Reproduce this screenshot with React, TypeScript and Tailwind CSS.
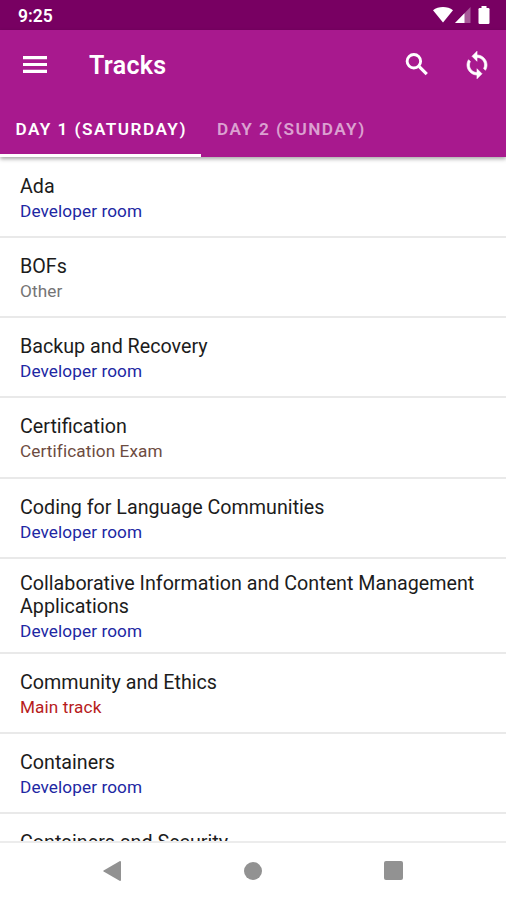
import React, { useState } from 'react';

interface Track {
  name: string;
  type: 'Developer room' | 'Other' | 'Certification Exam' | 'Main track';
  tall?: boolean;
}

const TYPE_COLORS: Record<Track['type'], string> = {
  'Developer room': 'text-[#2127a3]',
  Other: 'text-[#757575]',
  'Certification Exam': 'text-[#6d4c41]',
  'Main track': 'text-[#b71c1c]',
};

const TRACKS: Track[] = [
  { name: 'Ada', type: 'Developer room' },
  { name: 'BOFs', type: 'Other' },
  { name: 'Backup and Recovery', type: 'Developer room' },
  { name: 'Certification', type: 'Certification Exam' },
  { name: 'Coding for Language Communities', type: 'Developer room' },
  {
    name: 'Collaborative Information and Content Management Applications',
    type: 'Developer room',
    tall: true,
  },
  { name: 'Community and Ethics', type: 'Main track' },
  { name: 'Containers', type: 'Developer room' },
  { name: 'Containers and Security', type: 'Developer room' },
];

const TABS = ['DAY 1 (SATURDAY)', 'DAY 2 (SUNDAY)'];

const StatusBar: React.FC = () => (
  <div className="flex h-[30px] shrink-0 items-center justify-between bg-[#780062] pl-[18px] pr-[16px] text-white">
    <span className="pt-[3px] text-[17.5px] font-semibold leading-none">9:25</span>
    <div className="flex items-center">
      <svg className="h-[16px] w-[20px]" viewBox="0 0 20 16" fill="currentColor">
        <path d="M0 3.2C2.8 1 6.2 0 10 0s7.2 1 10 3.2L10 15.5z" />
      </svg>
      <svg className="ml-[2px] h-[16px] w-[16px]" viewBox="0 0 16 16" fill="currentColor">
        <path d="M15.5 0v16H0z" opacity="0.35" />
        <path d="M9.5 6.2V16H0z" />
      </svg>
      <svg className="ml-[7px] h-[18px] w-[12px]" viewBox="0 0 12 18" fill="currentColor">
        <rect x="3.5" y="0" width="5" height="4" />
        <rect x="0.5" y="2" width="11" height="16" rx="1.2" />
      </svg>
    </div>
  </div>
);

const TrackRow: React.FC<{ track: Track }> = ({ track }) => (
  <li
    className={`flex shrink-0 flex-col justify-center border-b-2 border-[#e9e9e9] px-5 pt-[2px] ${
      track.tall ? 'h-[95px]' : 'h-[80.15px]'
    }`}
  >
    <p className="text-[19.7px] leading-[23px] text-[#1c1c1c]">{track.name}</p>
    <p
      className={`mt-[3px] text-[17.2px] leading-[20px] tracking-[0.1px] ${TYPE_COLORS[track.type]}`}
    >
      {track.type}
    </p>
  </li>
);

const App: React.FC = () => {
  const [activeTab, setActiveTab] = useState(0);

  return (
    <div className="flex h-[900px] w-[506px] flex-col overflow-hidden bg-white font-[Roboto,sans-serif]">
      <StatusBar />

      {/* App bar */}
      <header className="relative z-10 shrink-0 bg-[#a8198e] text-white shadow-[0_2px_4px_rgba(0,0,0,0.35)]">
        <div className="flex h-[69px] items-center pl-5 pr-[14px]">
          <button type="button" aria-label="Menu">
            <svg className="h-[30px] w-[30px]" viewBox="0 0 30 30" fill="currentColor">
              <path d="M3 6h24v3.200H3zM3 12.900h24v3.200H3zM3 19.800h24V23H3z" />
            </svg>
          </button>
          <h1 className="ml-[39px] flex-1 pt-px text-[25px] font-semibold leading-none tracking-[0.3px]">
            Tracks
          </h1>
          <button type="button" aria-label="Search">
            <svg className="h-[30px] w-[30px]" viewBox="0 0 24 24" fill="none" stroke="currentColor">
              <circle cx="9.500" cy="9" r="5.400" strokeWidth="2.300" />
              <path d="M13.800 13.300L19.800 19.300" strokeWidth="2.500" />
            </svg>
          </button>
          <button type="button" aria-label="Refresh" className="ml-[30px]">
            <svg
              className="h-[30px] w-[30px]"
              viewBox="0 0 24 24"
              fill="currentColor"
              stroke="currentColor"
              strokeWidth="0.5"
            >
              <path d="M12 4V1L8 5l4 4V6c3.31 0 6 2.69 6 6 0 1.01-.25 1.97-.7 2.8l1.46 1.46C19.54 15.03 20 13.57 20 12c0-4.42-3.58-8-8-8zm0 14c-3.31 0-6-2.69-6-6 0-1.01.25-1.97.7-2.8L5.24 7.74C4.46 8.97 4 10.43 4 12c0 4.42 3.58 8 8 8v3l4-4-4-4v3z" />
            </svg>
          </button>
        </div>

        {/* Day tabs */}
        <div className="flex h-[58px]">
          {TABS.map((tab, index) => (
            <button
              key={tab}
              type="button"
              onClick={() => setActiveTab(index)}
              className={`border-b-[3px] pl-[15.500px] pr-[14.500px] pt-[6px] text-[17.2px] font-semibold tracking-[1.45px] ${
                index === activeTab
                  ? 'border-white text-white'
                  : 'border-transparent text-white/60'
              }`}
            >
              {tab}
            </button>
          ))}
        </div>
      </header>

      {/* Track list */}
      <ul className="flex min-h-0 flex-1 flex-col overflow-hidden pt-px">
        {TRACKS.map((track) => (
          <TrackRow key={track.name} track={track} />
        ))}
      </ul>

      {/* System navigation */}
      <nav className="flex h-[59px] shrink-0 items-center justify-between border-t-2 border-[#ececec] pl-[103px] pr-[103px] pb-[2px] text-[#929292]">
        <svg className="h-[20px] w-[18px]" viewBox="0 0 18 20" fill="currentColor">
          <path d="M17 0q1 0 1 1v18q0 1-1 1L.6 10.600q-.8-.6 0-1.200z" />
        </svg>
        <div className="h-[18px] w-[18px] rounded-full bg-[#929292]" />
        <div className="h-[19px] w-[19px] rounded-[2px] bg-[#929292]" />
      </nav>
    </div>
  );
};

export default App;
